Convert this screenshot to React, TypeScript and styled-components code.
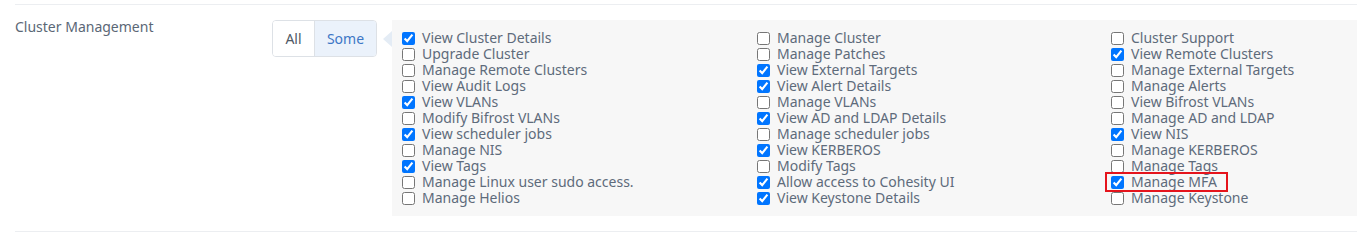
import React from "react";
import styled, { createGlobalStyle } from "styled-components";

const GlobalStyle = createGlobalStyle`
  html, body { margin: 0; padding: 0; background: #ffffff; }
  body { font-family: "Noto Sans", "Open Sans", sans-serif; }
`;

const Page = styled.div`
  padding: 4px 0 0 15px;
`;

const Section = styled.section`
  display: flex;
  align-items: flex-start;
  border-top: 1px solid #eceef1;
  border-bottom: 1px solid #eceef1;
  padding: 15px 0 15px 0;
`;

const Label = styled.div`
  width: 257px;
  flex: none;
  font-size: 14px;
  line-height: 16px;
  margin-top: -1px;
  color: #5b6776;
`;

const Toggle = styled.div`
  display: flex;
  flex: none;
  height: 37px;
  box-sizing: border-box;
  border: 1px solid #dde1e6;
  border-radius: 4px;
  overflow: hidden;
`;

const ToggleButton = styled.button<{ $active?: boolean; $w: number }>`
  width: ${(p) => p.$w}px;
  border: none;
  margin: 0;
  padding: 0;
  font-family: inherit;
  font-size: 14px;
  color: ${(p) => (p.$active ? "#3d77c6" : "#4f5a66")};
  background: ${(p) => (p.$active ? "#ebf2fb" : "#ffffff")};
  & + & {
    border-left: 1px solid #dde1e6;
  }
`;

const Panel = styled.div`
  position: relative;
  flex: 1;
  margin-left: 15px;
  background: #f7f7f7;
  padding: 10px 0 10px 10px;
  display: grid;
  grid-template-columns: 355px 354px 1fr;
  &::before {
    content: "";
    position: absolute;
    left: -9px;
    top: 11px;
    border-style: solid;
    border-width: 8px 9px 8px 0;
    border-color: transparent #e4ecf5 transparent transparent;
  }
`;

const Item = styled.label`
  position: relative;
  display: flex;
  align-items: center;
  height: 16px;
  font-size: 14px;
  line-height: 16px;
  color: #5e6b7b;
  white-space: nowrap;
`;

const Box = styled.input`
  margin: 0 7px 0 0;
  width: 13px;
  height: 13px;
  flex: none;
`;

const Highlight = styled.span`
  position: absolute;
  left: -6px;
  top: -2px;
  width: 123px;
  height: 20px;
  box-sizing: border-box;
  border: 2px solid #e5141c;
  pointer-events: none;
`;

type Perm = { label: string; checked?: boolean; highlight?: boolean };

const col1: Perm[] = [
  { label: "View Cluster Details", checked: true },
  { label: "Upgrade Cluster" },
  { label: "Manage Remote Clusters" },
  { label: "View Audit Logs" },
  { label: "View VLANs", checked: true },
  { label: "Modify Bifrost VLANs" },
  { label: "View scheduler jobs", checked: true },
  { label: "Manage NIS" },
  { label: "View Tags", checked: true },
  { label: "Manage Linux user sudo access." },
  { label: "Manage Helios" },
];
const col2: Perm[] = [
  { label: "Manage Cluster" },
  { label: "Manage Patches" },
  { label: "View External Targets", checked: true },
  { label: "View Alert Details", checked: true },
  { label: "Manage VLANs" },
  { label: "View AD and LDAP Details", checked: true },
  { label: "Manage scheduler jobs" },
  { label: "View KERBEROS", checked: true },
  { label: "Modify Tags" },
  { label: "Allow access to Cohesity UI", checked: true },
  { label: "View Keystone Details", checked: true },
];
const col3: Perm[] = [
  { label: "Cluster Support" },
  { label: "View Remote Clusters", checked: true },
  { label: "Manage External Targets" },
  { label: "Manage Alerts" },
  { label: "View Bifrost VLANs" },
  { label: "Manage AD and LDAP" },
  { label: "View NIS", checked: true },
  { label: "Manage KERBEROS" },
  { label: "Manage Tags" },
  { label: "Manage MFA", checked: true, highlight: true },
  { label: "Manage Keystone" },
];

const perms: Perm[] = [];
for (let i = 0; i < col1.length; i++) {
  perms.push(col1[i], col2[i], col3[i]);
}

export default function App() {
  return (
    <>
      <GlobalStyle />
      <Page>
        <Section>
          <Label>Cluster Management</Label>
          <Toggle>
            <ToggleButton $w={41}>All</ToggleButton>
            <ToggleButton $w={62} $active>
              Some
            </ToggleButton>
          </Toggle>
          <Panel>
            {perms.map((p) => (
              <Item key={p.label}>
                <Box type="checkbox" defaultChecked={!!p.checked} />
                {p.label}
                {p.highlight && <Highlight />}
              </Item>
            ))}
          </Panel>
        </Section>
      </Page>
    </>
  );
}
